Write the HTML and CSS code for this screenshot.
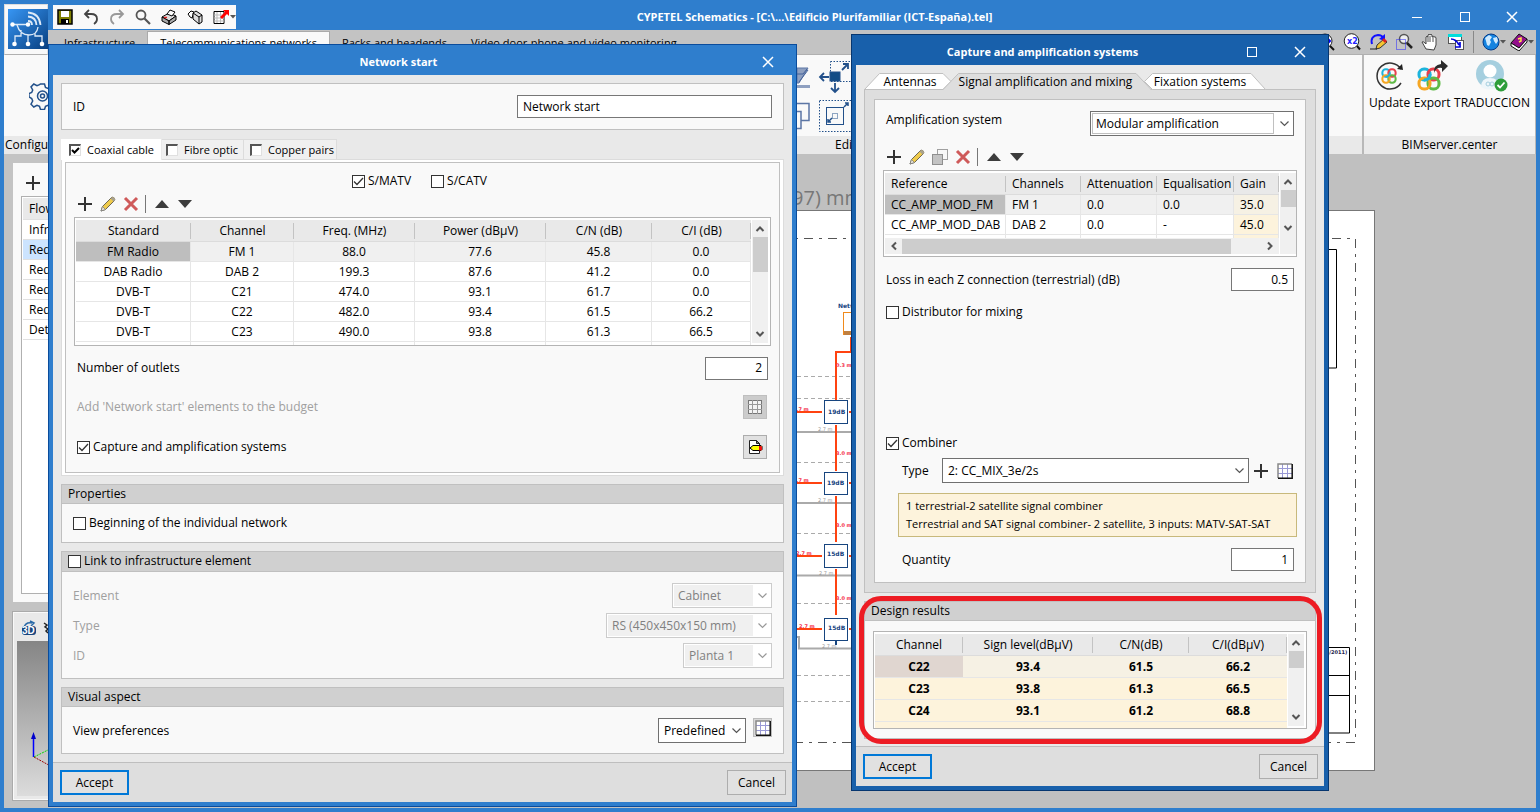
FILE: index.html
```html
<!DOCTYPE html>
<html lang="en">
<head>
<meta charset="utf-8">
<title>CYPETEL Schematics</title>
<link rel="stylesheet" href="styles.css">
</head>
<body>
<svg class="defs" aria-hidden="true">
  <symbol id="plus" viewBox="0 0 16 16"><path d="M8 1v14M1 8h14" stroke="#333" stroke-width="2" fill="none"/></symbol>
  <symbol id="pencil" viewBox="0 0 16 16"><path d="M1 15l1.500-4.500L11 2q1.500-1.500 3-.2 1.500 1.500 .2 3L5.500 13.500z" fill="#efcb4c" stroke="#6b6656" stroke-width="1"/><path d="M1 15l1.500-4.500 3 3z" fill="#e8e4d8" stroke="#777" stroke-width=".7"/><path d="M10.500 2.500l3 3L15 4q.5-1.500-.8-2.500-1.300-.9-2.500.2z" fill="#a9a28c"/></symbol>
  <symbol id="cross" viewBox="0 0 16 16"><path d="M2 2l12 12M14 2L2 14" stroke="#cf5a5a" stroke-width="3" fill="none"/></symbol>
  <symbol id="copy" viewBox="0 0 16 16"><rect x="5.500" y=".5" width="10" height="10" fill="#f7f7f7" stroke="#a0a0a0"/><rect x=".5" y="5.500" width="10" height="10" fill="#c3c3c3" stroke="#8f8f8f"/></symbol>
  <symbol id="up" viewBox="0 0 16 16"><path d="M1 12l7-8 7 8z" fill="#3c3c3c"/></symbol>
  <symbol id="down" viewBox="0 0 16 16"><path d="M1 4l7 8 7-8z" fill="#3c3c3c"/></symbol>
  <symbol id="grid" viewBox="0 0 16 16"><rect x="1" y="1" width="14" height="14" fill="#fff"/><path d="M5.500 1v14M10.500 1v14M1 5.500h14M1 10.500h14" stroke="#9a9ad6" fill="none"/><path d="M15 1H1v14" stroke="#888" fill="none" stroke-width="1.500"/><path d="M15.200 1v14.200H1" stroke="#111" fill="none" stroke-width="1.500"/></symbol>
  <symbol id="gridoff" viewBox="0 0 16 16"><rect x="1.500" y="1.500" width="13" height="13" fill="#f4f4f4" stroke="#777"/><path d="M5.500 1v14M10.500 1v14M1 5.500h14M1 10.500h14" stroke="#999" fill="none"/></symbol>
  <symbol id="docpen" viewBox="0 0 16 16"><path d="M2.500 1.500h7l3 3v10h-10z" fill="#fff" stroke="#222"/><path d="M9.500 1.500v3h3z" fill="#777" stroke="#222"/><path d="M3 9l3-2.500h8l1 1v3l-1 1H6z" fill="#ff0" stroke="#000"/><path d="M12 7h2l1 1v3l-1 .5h-2z" fill="#e11"/></symbol>
  <symbol id="sup" viewBox="0 0 10 10"><path d="M1.500 7L5 3.500 8.500 7" fill="none" stroke="#555" stroke-width="2"/></symbol>
  <symbol id="sdown" viewBox="0 0 10 10"><path d="M1.500 3L5 6.500 8.500 3" fill="none" stroke="#555" stroke-width="2"/></symbol>
  <symbol id="sleft" viewBox="0 0 10 10"><path d="M7 1.500L3.500 5 7 8.500" fill="none" stroke="#555" stroke-width="2"/></symbol>
  <symbol id="sright" viewBox="0 0 10 10"><path d="M3 1.500L6.500 5 3 8.500" fill="none" stroke="#555" stroke-width="2"/></symbol>
  <symbol id="close" viewBox="0 0 12 12"><path d="M1 1l10 10M11 1L1 11" stroke="#fff" stroke-width="1.500" fill="none"/></symbol>
  <symbol id="max" viewBox="0 0 12 12"><rect x="1.500" y="1.500" width="9" height="9" stroke="#fff" fill="none"/></symbol>
  <symbol id="min" viewBox="0 0 12 12"><path d="M1 6.500h10" stroke="#fff" fill="none"/></symbol>
  <symbol id="caret" viewBox="0 0 6 4"><path d="M0 0h6L3 3.500z" fill="#555"/></symbol>
  <symbol id="knot" viewBox="0 0 24 24"><g fill="none" stroke-width="3"><rect x="2" y="2" width="11" height="11" rx="5" stroke="#1db4dc"/><rect x="11" y="2" width="11" height="11" rx="5" stroke="#e8404c"/><rect x="11" y="11" width="11" height="11" rx="5" stroke="#5fb946"/><rect x="2" y="11" width="11" height="11" rx="5" stroke="#f5a623"/><path d="M7 13q6 0 6-6" stroke="#1db4dc"/></g></symbol>
</svg>

<div class="app">
  <header class="head">
    <div class="logo">
      <svg viewBox="0 0 40 40" width="40" height="40"><defs><linearGradient id="lg" x1="0" y1="0" x2="1" y2="1"><stop offset="0" stop-color="#3796f4"/><stop offset="1" stop-color="#083f80"/></linearGradient></defs><rect width="40" height="40" fill="url(#lg)"/><g fill="none" stroke="#dce9f7"><path d="M5 15.500h15M9 16q3 10 12 10 8 0 9-8M13 21v6H7v8M20 26v9M27 24v3h7v8" stroke-width="1.300"/><path d="M20 12q4 0 4 4M20 7.500q8 .5 8.500 8.500M20 3.500q11.500 1 12.500 12.500" stroke-width="1.800"/></g><g fill="#fff"><circle cx="4.500" cy="15.500" r="2.200"/><circle cx="20" cy="15.500" r="2.200"/><circle cx="6.500" cy="35" r="2.300"/><circle cx="20" cy="35" r="2.300"/><circle cx="34" cy="35" r="2.300"/></g></svg>
    </div>
    <div class="titlebar">
      <nav class="quick">
        <svg viewBox="0 0 16 16" width="16" height="16"><rect x="1" y="1" width="14" height="14" fill="#808000" stroke="#000" stroke-width="1.500"/><rect x="4" y="2" width="8" height="6" fill="#fff"/><rect x="4" y="10" width="8" height="5" fill="#000"/><rect x="9" y="11" width="2" height="3" fill="#fff"/></svg>
        <svg viewBox="0 0 16 16" width="16" height="16"><path d="M6 1L2 5l4 4M2 5h6q6 0 6 5 0 3-3 5" fill="none" stroke="#444" stroke-width="1.800"/></svg>
        <svg viewBox="0 0 16 16" width="16" height="16"><path d="M10 1l4 4-4 4M14 5H8q-6 0-6 5 0 3 3 5" fill="none" stroke="#999" stroke-width="1.800"/></svg>
        <svg viewBox="0 0 16 16" width="16" height="16"><circle cx="6" cy="6" r="4.500" fill="none" stroke="#555" stroke-width="1.800"/><path d="M9.500 9.500L15 15" stroke="#555" stroke-width="2.200"/></svg>
        <svg viewBox="0 0 16 16" width="16" height="16"><path d="M1 8l7-4 7 3-7 5z" fill="#ddd" stroke="#000"/><path d="M1 8v4l7 3.500V12zM15 7v4l-7 4.500V12z" fill="#aaa" stroke="#000"/><path d="M6 5l3-4 5 2-3 4z" fill="#fff" stroke="#000"/><path d="M3 8.500h3" stroke="#d22" stroke-width="1.500"/></svg>
        <svg viewBox="0 0 16 16" width="16" height="16"><path d="M1 5l3-3 3 1-2 6-2-1z" fill="#fff" stroke="#000"/><path d="M6 4l3-2 6 4v7l-3 2-6-5z" fill="#ddd" stroke="#000"/><path d="M6 4l6 4v7M12 8l3-2" stroke="#000" fill="none"/></svg>
        <span class="drop"><svg viewBox="0 0 16 16" width="16" height="16"><path d="M1 2.500h10v12H1z" fill="#fff" stroke="#000"/><path d="M4 3v11M7.500 3v11M1 6h10M1 9h10M1 12h10" stroke="#bbb" fill="none"/><path d="M7 8l5-5-2-2h6v6l-2-2-5 5z" fill="#f00"/></svg><svg width="6" height="4"><use href="#caret"/></svg></span>
      </nav>
      <h1 class="apptitle">CYPETEL Schematics - [C:\...\Edificio Plurifamiliar (ICT-España).tel]</h1>
      <div class="winbtns">
        <button aria-label="Minimise"><svg width="12" height="12"><use href="#min"/></svg></button>
        <button aria-label="Maximise"><svg width="12" height="12"><use href="#max"/></svg></button>
        <button aria-label="Close"><svg width="12" height="12"><use href="#close"/></svg></button>
      </div>
    </div>
    <div class="tabrow">
      <button class="rtab">Infrastructure</button>
      <button class="rtab on">Telecommunications networks</button>
      <button class="rtab">Racks and headends</button>
      <button class="rtab">Video door-phone and video monitoring</button>
      <div class="viewtools">
        <svg viewBox="0 0 18 18" width="18" height="18"><circle cx="8" cy="8" r="7" fill="#fff" stroke="#222"/><path d="M4 8h8M10 5l3 3-3 3" stroke="#00f" fill="none" stroke-width="2"/><path d="M13 13l4 4" stroke="#111" stroke-width="2"/></svg>
        <svg viewBox="0 0 18 18" width="18" height="18"><circle cx="8.500" cy="8" r="7.300" fill="#fff" stroke="#222"/><text x="4" y="11" class="x2">x2</text><path d="M14 13l3 3.500" stroke="#111" stroke-width="2"/></svg>
        <svg viewBox="0 0 18 18" width="18" height="18"><path d="M3 11Q1 3 9 2q4 0 5 3" fill="none" stroke="#11f" stroke-width="2"/><path d="M16 1v7l-6-2z" fill="#11f"/><path d="M7 16l1-4 7-6 3 3-7 6z" fill="#f4c430" stroke="#333"/><path d="M13 7l2-2 3 3-2 2z" fill="#d22"/><path d="M1 16h7" stroke="#222"/></svg>
        <svg viewBox="0 0 18 18" width="18" height="18"><circle cx="9" cy="6" r="4.500" fill="#eee" stroke="#555" stroke-width="1.500"/><path d="M12 10l5 5" stroke="#222" stroke-width="2.500"/><rect x="1.500" y="6.500" width="9" height="10" fill="none" stroke="#22f" stroke-dasharray="1 1"/></svg>
        <svg viewBox="0 0 18 18" width="18" height="18"><path d="M5 16L1 9q1-1 3 1l1 1V4q1-1.500 2 0V2q1-1.500 2 0 1-1.500 2 0v2q1.500-1.500 2 0 1.500-1 2 1v7l-2 5z" fill="#fff" stroke="#444"/><path d="M7 4v5M9 3v6M12 4v5" stroke="#555"/></svg>
        <svg viewBox="0 0 18 18" width="18" height="18"><rect x="1.500" y="1.500" width="13" height="9" fill="#fff" stroke="#555"/><path d="M1 1h14v3H1z" fill="#0dd"/><rect x="8.500" y="7.500" width="8" height="9" fill="#fff" stroke="#555"/><path d="M4 6q5 0 8 6M13 9v5H8" stroke="#00d" stroke-width="1.700" fill="none"/></svg>
        <i class="vsep"></i>
        <span class="drop"><svg viewBox="0 0 18 18" width="18" height="18"><circle cx="9" cy="9" r="8" fill="#1583e0" stroke="#063b88"/><path d="M3 5l4-3 3 2-2 3 1 2-2 4-2-1-1-4zM11 5l4-1 1 4-2 3-2-3z" fill="#cfeaff"/></svg><svg width="6" height="4"><use href="#caret"/></svg></span>
        <span class="drop"><svg viewBox="0 0 18 18" width="18" height="18"><path d="M1 10l8-9 8 5-8 9z" fill="#93108c" stroke="#111"/><path d="M1 10v3l8 5 8-9V6l-8 9z" fill="#fff" stroke="#111"/><path d="M8 6l3-1v3L9 9" stroke="#ffe14a" stroke-width="1.500" fill="none"/></svg><svg width="6" height="4"><use href="#caret"/></svg></span>
      </div>
    </div>
  </header>

  <section class="ribbon">
    <div class="rgroup cfg">
      <div class="rbody"><svg viewBox="0 0 28 28" width="28" height="28"><g fill="none" stroke="#22508a" stroke-width="1.500"><path d="M11.500 2h4l1 3.500 2.500 1 3.200-1.700 2.800 2.900-1.700 3.100 1 2.500L28 14v0l-3.700 2.500-1 2.500 1.700 3.200-2.800 2.800-3.200-1.700-2.500 1-1 3.200h-4l-1-3.200-2.500-1L4.800 25 2 22.200l1.700-3.200-1-2.500L0 15v-3.500l2.700-1 1-2.500L2 4.900 4.800 2 8 3.700l2.500-1z"/><circle cx="13.500" cy="14" r="5"/><circle cx="13.500" cy="14" r="2"/></g></svg></div>
      <div class="rlabel">Configuration</div>
    </div>
    <div class="rgroup edit">
      <div class="rbody">
        <svg viewBox="797 58 60 76" width="60" height="76"><g fill="none" stroke="#22508a">
          <path d="M797 68h11l-9 15h-2z" fill="#8fa0c0" stroke="#5c76a5"/><path d="M797 74h6l4-5M799 82l9-12" stroke="#43629a"/><path d="M797 86.500h13" stroke="#8fa0c0" stroke-width="3"/>
          <rect x="830.500" y="61.500" width="30" height="20" stroke-dasharray="1.500 1.500"/><rect x="830" y="72" width="10" height="9" fill="#124c86"/><path d="M829 77h-8M824 73l-4 4 4 4M835 83v8M831 88l4 4 4-4M842 70l6-6M843 64h5v5" stroke-width="1.800"/>
          <path d="M797 103.500h12v17h-8M797 111.500h4v17h-4" stroke="#5c76a5" stroke-width="1.500"/>
          <rect x="819.500" y="100.500" width="36" height="31" stroke-dasharray="1.500 1.500"/><rect x="826.500" y="107.500" width="17" height="17"/><rect x="832.500" y="113.500" width="5" height="5" stroke-dasharray="1 1"/><path d="M828 122l4-4M828 119v3h3M844 107l4-4M845 103h3v3" stroke-width="1.500"/>
        </g></svg>
      </div>
      <div class="rlabel">Edit</div>
    </div>
    <div class="rgroup bim">
      <div class="rbody">
        <button class="rbtn"><svg viewBox="0 0 32 32" width="32" height="32"><path d="M27 9A13 13 0 1 0 27 23" fill="none" stroke="#333" stroke-width="1.500"/><path d="M23 9l6 1-1-6z" fill="#222"/><use href="#knot" x="7" y="8" width="16" height="16"/></svg>Update</button>
        <button class="rbtn"><svg viewBox="0 0 32 32" width="32" height="32"><use href="#knot" x="1" y="7" width="24" height="24"/><path d="M18 13q-1-8 7-9V0l7 6-6 6V8q-6-1-8 5z" fill="#2b2b2b"/></svg>Export</button>
        <button class="rbtn"><svg viewBox="0 0 34 32" width="34" height="32"><circle cx="15" cy="14" r="14" fill="#a5cfdf"/><circle cx="15" cy="11" r="6.500" fill="#fff"/><path d="M6 27q0-9 9-9t9 9q-9 5-18 0z" fill="#eef6fa"/><circle cx="13" cy="24" r="2" fill="none" stroke="#a5cfdf"/><circle cx="17" cy="24" r="2" fill="none" stroke="#a5cfdf"/><circle cx="26" cy="25" r="6.500" fill="#2e9e3a"/><path d="M22.500 25l2.500 2.500 4.500-5" stroke="#fff" stroke-width="1.800" fill="none"/></svg>TRADUCCION</button>
      </div>
      <div class="rlabel">BIMserver.center</div>
    </div>
  </section>

  <main class="work">
    <aside class="side">
      <div class="tree">
        <button class="ic" aria-label="Add"><svg width="16" height="16"><use href="#plus"/></svg></button>
        <ul class="treelist"><li class="th">Flow</li><li>Infra</li><li class="sel">Red</li><li>Red</li><li>Red</li><li>Red</li><li>Deta</li></ul>
      </div>
      <div class="view3d">
        <div class="v3bar"><svg viewBox="0 0 40 18" width="40" height="18"><path d="M3 8q1-6 8-5M9 1l4 2-3 3" stroke="#2a6aa8" stroke-width="1.500" fill="none"/><rect x="1" y="6" width="14" height="9" rx="3" fill="#17457f"/><text x="1" y="14" class="t3d">3D</text><path d="M23 3l3 2-2 2 3 2-2 2 2 2" stroke="#222" fill="none" stroke-width="1.500"/></svg></div>
        <div class="v3scene"><svg viewBox="0 0 50 60" width="50" height="60"><path d="M16.500 36V18" stroke="#00f" stroke-width="1.500"/><path d="M14 18l2.500-7 2.500 7z" fill="#00c"/><path d="M17 36l22-11" stroke="#0d0" stroke-dasharray="2 1"/><path d="M17 36l22 12" stroke="#900" stroke-dasharray="2 1"/></svg></div>
      </div>
    </aside>
    <div class="canvas">
      <svg class="plan" width="1296" height="654" viewBox="240 154 1296 654">
        <text x="765" y="205" class="size">x 297) mm</text>
        <rect x="400.500" y="210.500" width="974" height="560" fill="#fff" stroke="#777"/>
        <path d="M420 238.500H1355.500V742.500H420" fill="none" stroke="#555" stroke-dasharray="9 6 3 6"/>
        <path d="M1200 249.500h136.500v118.500H1200M1200 647.500h149.500v85.500H1200M1200 675.500h149M1200 695.500h149" fill="none" stroke="#000"/>
        <text x="1320" y="654" class="rev">(15/2011)</text>
        <g stroke="#aaa" stroke-dasharray="4 3"><path d="M797 376.500h60M797 398.500h60M797 462.500h60M797 533.500h60M797 603.500h60M797 675.500h60M797 701.500h60"/></g>
        <path d="M797 432h60M797 503h60M797 575.500h60M797 637h2v11.500h58" stroke="#aaa" stroke-width="2" fill="none"/>
        <path d="M857 352h-21v49M836 425v46M836 496v46M836 569v46M797 412h25M797 483h25M797 556h25M797 629h25M849 412h8M849 483h8M849 556h8M849 629h8" stroke="#ff4310" stroke-width="2" fill="none"/>
        <rect x="843.500" y="312.500" width="20" height="22" fill="#fff" stroke="#f08a1c"/><path d="M844 333h14" stroke="#c08040" stroke-width="4"/>
        <path d="M851 337v15" stroke="#ff4310" stroke-width="2"/>
        <g fill="#fff" stroke="#17457f"><rect x="824.500" y="400.500" width="23" height="23"/><rect x="824.500" y="472.500" width="23" height="22"/><rect x="824.500" y="544.500" width="23" height="23"/><rect x="824.500" y="618.500" width="23" height="22"/><path d="M836 641v4" stroke-width="2"/></g>
        <g class="tag"><text x="828" y="414">19dB</text><text x="827" y="485">19dB</text><text x="827" y="556">15dB</text><text x="828" y="630">15dB</text><text x="838" y="308">Network</text></g>
        <g class="len"><text x="836" y="367">0.3 m</text><text x="836" y="455">3.0 m</text><text x="836" y="527">3.0 m</text><text x="836" y="600">3.0 m</text><text x="793" y="411">2.7 m</text><text x="793" y="482">2.7 m</text><text x="796" y="555">2.7 m</text><text x="799" y="628">2.7 m</text></g>
        <g class="len2"><text x="818" y="431">2.7 m</text><text x="818" y="502">2.7 m</text><text x="819" y="575">2.7 m</text><text x="822" y="648">2.7 m</text></g>
      </svg>
    </div>
  </main>
</div>

<section class="dialog d1" aria-label="Network start">
  <header class="dtitle"><h2>Network start</h2><div class="dbtns"><button aria-label="Close"><svg width="12" height="12"><use href="#close"/></svg></button></div></header>
  <div class="dbody">
    <div class="box idbox"><label for="nid">ID</label><input id="nid" type="text" value="Network start"></div>
    <div class="ctabs">
      <div class="ctabrow">
        <label class="ctab on"><input type="checkbox" class="old" checked>Coaxial cable</label>
        <label class="ctab"><input type="checkbox" class="old">Fibre optic</label>
        <label class="ctab"><input type="checkbox" class="old">Copper pairs</label>
      </div>
      <div class="cpanel"><div class="cinner">
        <div class="modes"><label><input type="checkbox" class="cb" checked>S/MATV</label><label><input type="checkbox" class="cb">S/CATV</label></div>
        <div class="tools">
          <button class="ic" aria-label="Add"><svg width="16" height="16"><use href="#plus"/></svg></button><button class="ic" aria-label="Edit"><svg width="16" height="16"><use href="#pencil"/></svg></button><button class="ic" aria-label="Delete"><svg width="16" height="16"><use href="#cross"/></svg></button><i></i><button class="ic" aria-label="Up"><svg width="16" height="16"><use href="#up"/></svg></button><button class="ic" aria-label="Down"><svg width="16" height="16"><use href="#down"/></svg></button>
        </div>
        <div class="grid g1">
          <table><colgroup><col class="w115"><col class="w103"><col class="w121"><col class="w131"><col class="w106"><col></colgroup>
            <thead><tr><th>Standard</th><th>Channel</th><th>Freq. (MHz)</th><th>Power (dBµV)</th><th>C/N (dB)</th><th>C/I (dB)</th></tr></thead>
            <tbody>
              <tr class="cur"><td>FM Radio</td><td>FM 1</td><td>88.0</td><td>77.6</td><td>45.8</td><td>0.0</td></tr>
              <tr><td>DAB Radio</td><td>DAB 2</td><td>199.3</td><td>87.6</td><td>41.2</td><td>0.0</td></tr>
              <tr><td>DVB-T</td><td>C21</td><td>474.0</td><td>93.1</td><td>61.7</td><td>0.0</td></tr>
              <tr><td>DVB-T</td><td>C22</td><td>482.0</td><td>93.4</td><td>61.5</td><td>66.2</td></tr>
              <tr><td>DVB-T</td><td>C23</td><td>490.0</td><td>93.8</td><td>61.3</td><td>66.5</td></tr>
              <tr><td></td><td></td><td></td><td></td><td></td><td></td></tr>
            </tbody></table>
          <div class="vscroll"><svg width="10" height="10"><use href="#sup"/></svg><b class="thumb t35"></b><svg class="end" width="10" height="10"><use href="#sdown"/></svg></div>
        </div>
        <div class="line l1"><label for="outlets">Number of outlets</label><input id="outlets" class="num" type="text" value="2"></div>
        <div class="line l2"><span class="off">Add 'Network start' elements to the budget</span><button class="sq dis" disabled aria-label="Budget"><svg width="16" height="16"><use href="#gridoff"/></svg></button></div>
        <div class="line l2"><label><input type="checkbox" class="cb" checked>Capture and amplification systems</label><button class="sq" aria-label="Edit systems"><svg width="16" height="16"><use href="#docpen"/></svg></button></div>
      </div></div>
    </div>
    <div class="group"><h3>Properties</h3><div class="gbody props"><label><input type="checkbox" class="cb">Beginning of the individual network</label></div></div>
    <div class="group"><h3 class="tick"><label><input type="checkbox" class="cb">Link to infrastructure element</label></h3>
      <div class="gbody link">
        <div class="frow"><label class="off" for="el">Element</label><select id="el" class="w100" disabled><option>Cabinet</option></select></div>
        <div class="frow"><label class="off" for="ty">Type</label><select id="ty" class="w166" disabled><option>RS (450x450x150 mm)</option></select></div>
        <div class="frow"><label class="off" for="pl">ID</label><select id="pl" class="w89" disabled><option>Planta 1</option></select></div>
      </div></div>
    <div class="group"><h3>Visual aspect</h3><div class="gbody visual"><label for="vp">View preferences</label><span class="pair"><select id="vp" class="w88"><option>Predefined</option></select><button class="mini" aria-label="Preferences"><svg width="16" height="16"><use href="#grid"/></svg></button></span></div></div>
  </div>
  <footer class="dfoot"><button class="btn primary">Accept</button><button class="btn">Cancel</button></footer>
</section>

<section class="dialog d2" aria-label="Capture and amplification systems">
  <header class="dtitle"><h2>Capture and amplification systems</h2><div class="dbtns"><button aria-label="Maximise"><svg width="12" height="12"><use href="#max"/></svg></button><button aria-label="Close"><svg width="12" height="12"><use href="#close"/></svg></button></div></header>
  <div class="dbody">
    <div class="stabs">
      <button class="stab s1"><svg viewBox="0 0 88 17" width="88" height="17"><path d="M.5 16.500L15.500 .5H79l8 8-8 8z" fill="#fff" stroke="#c0c0c0"/></svg><span>Antennas</span></button>
      <button class="stab s2"><svg viewBox="0 0 208 17" width="208" height="17"><path d="M0 17L15.500 .5H193L208 17z" fill="#dedede"/><path d="M0 16.500L15.500 .5H193L208 16.500" fill="none" stroke="#c0c0c0"/></svg><span>Signal amplification and mixing</span></button>
      <button class="stab s3"><svg viewBox="0 0 122 17" width="122" height="17"><path d="M.5 8.500L8.500 .5H107L121.500 16.500H8.500z" fill="#fff" stroke="#c0c0c0"/></svg><span>Fixation systems</span></button>
    </div>
    <div class="spanel"><div class="sinner">
      <div class="srow amp"><label for="as">Amplification system</label><span class="boxed"><select id="as" class="w204"><option>Modular amplification</option></select></span></div>
      <div class="tools">
        <button class="ic" aria-label="Add"><svg width="16" height="16"><use href="#plus"/></svg></button><button class="ic" aria-label="Edit"><svg width="16" height="16"><use href="#pencil"/></svg></button><button class="ic" aria-label="Copy"><svg width="16" height="16"><use href="#copy"/></svg></button><button class="ic" aria-label="Delete"><svg width="16" height="16"><use href="#cross"/></svg></button><i></i><button class="ic" aria-label="Up"><svg width="16" height="16"><use href="#up"/></svg></button><button class="ic" aria-label="Down"><svg width="16" height="16"><use href="#down"/></svg></button>
      </div>
      <div class="grid g2">
        <div class="gmain">
          <div class="gclip"><table><colgroup><col class="w121"><col class="w75"><col class="w76"><col class="w77"><col></colgroup>
            <thead><tr><th>Reference</th><th>Channels</th><th>Attenuation</th><th>Equalisation</th><th>Gain</th></tr></thead>
            <tbody>
              <tr class="cur"><td>CC_AMP_MOD_FM</td><td>FM 1</td><td>0.0</td><td>0.0</td><td class="calc">35.0</td></tr>
              <tr><td>CC_AMP_MOD_DAB</td><td>DAB 2</td><td>0.0</td><td>-</td><td class="calc">45.0</td></tr>
              <tr><td></td><td></td><td></td><td></td><td class="calc"></td></tr>
            </tbody></table></div>
          <div class="hscroll"><svg width="10" height="10"><use href="#sleft"/></svg><b></b><svg width="10" height="10"><use href="#sright"/></svg></div>
        </div>
        <div class="vscroll"><svg width="10" height="10"><use href="#sup"/></svg><b class="thumb t17"></b><svg class="end" width="10" height="10"><use href="#sdown"/></svg></div>
      </div>
      <div class="srow loss"><label for="zl">Loss in each Z connection (terrestrial) (dB)</label><input id="zl" class="num" type="text" value="0.5"></div>
      <div class="srow dist"><label><input type="checkbox" class="cb">Distributor for mixing</label></div>
      <div class="srow comb"><label><input type="checkbox" class="cb" checked>Combiner</label></div>
      <div class="type"><label for="ct">Type</label><select id="ct"><option>2: CC_MIX_3e/2s</option></select><button class="ic" aria-label="Add"><svg width="16" height="16"><use href="#plus"/></svg></button><button class="ic" aria-label="List"><svg width="16" height="16"><use href="#grid"/></svg></button></div>
      <p class="info">1 terrestrial-2 satellite signal combiner<br>Terrestrial and SAT signal combiner- 2 satellite, 3 inputs: MATV-SAT-SAT</p>
      <div class="srow qty"><label for="q">Quantity</label><input id="q" class="num" type="text" value="1"></div>
    </div></div>
    <div class="group results"><h3>Design results</h3><div class="gbody">
      <div class="grid g3">
        <table><colgroup><col class="w88"><col class="w130"><col class="w96"><col></colgroup>
          <thead><tr><th>Channel</th><th>Sign level(dBµV)</th><th>C/N(dB)</th><th>C/I(dBµV)</th></tr></thead>
          <tbody>
            <tr class="cur"><td>C22</td><td>93.4</td><td>61.5</td><td>66.2</td></tr>
            <tr><td>C23</td><td>93.8</td><td>61.3</td><td>66.5</td></tr>
            <tr><td>C24</td><td>93.1</td><td>61.2</td><td>68.8</td></tr>
            <tr><td></td><td></td><td></td><td></td></tr>
          </tbody></table>
        <div class="vscroll"><svg width="10" height="10"><use href="#sup"/></svg><b class="thumb t17"></b><svg class="end" width="10" height="10"><use href="#sdown"/></svg></div>
      </div>
    </div></div>
  </div>
  <footer class="dfoot"><button class="btn primary">Accept</button><button class="btn">Cancel</button></footer>
</section>
</body>
</html>
```
FILE: styles.css
```css
* { box-sizing: border-box; }
body { margin: 0; font: 12px/18px "Open Sans", "Noto Sans", sans-serif; color: #000; background: #c0c0c0; overflow: hidden; }
button, input, select { font: inherit; color: inherit; margin: 0; }
button { background: none; border: 0; padding: 0; }
svg { display: block; flex: none; }
h1, h2, h3, p, ul { margin: 0; padding: 0; font-weight: normal; font-size: 12px; list-style: none; }
.defs { position: absolute; width: 0; height: 0; }

/* main window */
.app { height: 100vh; min-height: 812px; display: flex; flex-direction: column; border: 4px solid #2f7ecd; background: #c3c3c3; }
.head { display: grid; grid-template: 26px 25px / 44px 1fr; background: #2f7ecd; }
.logo { grid-row: 1 / 3; background: #f9f9f9; padding: 4px 0 0 3px; border: 1px solid #ddd; border-bottom: 1px solid #b0b0b0; }
.titlebar { display: flex; align-items: center; }
.quick { display: flex; align-items: center; gap: 10px; background: #f9f9f9; height: 24px; width: 183px; margin-left: 5px; padding-left: 4px; }
.drop { display: flex; align-items: center; gap: 1px; }
.apptitle { flex: 1; text-align: center; color: #fff; font-weight: bold; font-size: 11px; }
.winbtns { display: flex; width: 143px; }
.winbtns button { width: 48px; height: 26px; display: grid; place-items: center; }
.tabrow { display: flex; align-items: flex-end; background: #c3c3c3; border-bottom: 1px solid #b0b0b0; padding-left: 4px; }
.rtab { height: 23px; padding: 0 12px; white-space: nowrap; font-size: 11px; }
.rtab.on { background: #f9f9f9; border: 1px solid #aaa; border-bottom: 0; }
.viewtools { margin-left: auto; align-self: center; display: flex; align-items: center; gap: 8px; padding-right: 2px; }
.viewtools .drop { gap: 0; }
.viewtools .drop + .drop { margin-left: -4px; }
.vsep { width: 1px; height: 22px; background: #888; }
.x2 { font: bold 8px "DejaVu Sans", sans-serif; fill: #22f; }

.ribbon { display: flex; height: 99px; background: #f9f9f9; }
.rgroup { display: flex; flex-direction: column; border-right: 2px solid #b8b8b8; }
.rbody { flex: 1; display: flex; }
.rlabel { background: #e9e9e9; height: 18px; }
.cfg { flex: 0 0 790px; border: 0; }
.cfg .rbody { padding: 27px 0 0 25px; }
.cfg .rlabel { padding-left: 1px; }
.edit { flex: 1; }
.edit .rbody { padding: 3px 0 0 3px; }
.edit .rlabel { padding-left: 41px; }
.bim { flex: 0 0 172px; border-right: 1px solid #b8b8b8; }
.bim .rbody { justify-content: space-between; padding: 5px 5px 0 5px; }
.bim .rlabel { text-align: center; }
.rbtn { display: flex; flex-direction: column; align-items: center; gap: 2px; }

.work { flex: 1; display: flex; min-height: 0; }
.side { flex: 0 0 236px; display: flex; flex-direction: column; gap: 10px; padding: 9px 0 8px 9px; }
.tree { flex: 1; background: #f9f9f9; padding: 12px 8px 8px; display: flex; flex-direction: column; gap: 5px; }
.ic { width: 24px; height: 16px; display: grid; place-items: center; }
.treelist { flex: 1; background: #fff; border: 1px solid #b0b0b0; padding: 1px; }
.treelist li { height: 20px; line-height: 20px; padding-left: 6px; border-bottom: 1px solid #e0e0e0; }
.treelist .th { height: 22px; line-height: 21px; background: #e9e9e9; }
.treelist .sel { background: #cce4ff; }
.view3d { height: 188px; background: #e9e9e9; border: 1px solid #f9f9f9; outline: 1px solid #aaa; padding: 3px; display: flex; flex-direction: column; }
.v3bar { height: 25px; padding: 4px 4px; }
.t3d { font: bold 10px "Liberation Sans", sans-serif; fill: #fff; }
.v3scene { flex: 1; background: linear-gradient(#858585, #dcdcdc); display: flex; align-items: flex-end; padding-bottom: 15px; }
.canvas { flex: 1; overflow: hidden; background: #c0c0c0; }
.size { font: 20px "Open Sans", sans-serif; fill: #777; }
.tag { font: bold 6px "DejaVu Sans", sans-serif; fill: #17457f; }
.len { font: bold 5px "DejaVu Sans", sans-serif; fill: #f4304c; }
.len2 { font: 5px "DejaVu Sans", sans-serif; fill: #999; }
.rev { font: bold 5px "DejaVu Sans", sans-serif; fill: #1a1a4c; }

/* dialogs */
.dialog { position: absolute; --edge: #2f7ecd; --rim: #0a4c9c; background: var(--edge); border: 1px solid var(--rim); padding: 0 4px 4px; }
.d1 { left: 48px; top: 44px; width: 749px; }
.d2 { left: 851px; top: 34px; width: 478px; --edge: #1860ab; --rim: #06366f; }
.dtitle { height: 30px; position: relative; display: grid; place-items: center; color: #fff; padding-top: 4px; padding-right: 48px; }
.d2 .dtitle { padding-right: 95px; }
.dtitle h2 { font-weight: bold; font-size: 11px; }
.dbtns { position: absolute; right: 0; top: 2px; display: flex; }
.dbtns button { width: 48px; height: 30px; display: grid; place-items: center; }
.dbody { background: #e9e9e9; padding: 8px 8px 8px; display: flex; flex-direction: column; gap: 8px; }
.dfoot { display: flex; justify-content: space-between; background: #dedede; border-top: 1px solid #bebebe; padding: 7px 6px 7px 7px; height: 40px; }
.btn { height: 25px; width: 59px; border: 1px solid #adadad; background: #e1e1e1; }
.btn.primary { width: 69px; border: 2px solid #0078d7; }
.box { background: #f9f9f9; border: 1px solid #c0c0c0; }
.idbox { display: flex; align-items: center; justify-content: space-between; height: 47px; padding: 0 11px; }
input[type="text"] { border: 1px solid #777; background: #fff; height: 23px; padding: 0 5px 1px; }
.idbox input { width: 255px; }
input.num { width: 63px; text-align: right; }
label { display: flex; align-items: center; }
.cb { appearance: none; width: 13px; height: 13px; border: 1px solid #333; background: #fff; margin-right: 3px; }
.cb:checked { background: #fff url("data:image/svg+xml,%3Csvg xmlns='http://www.w3.org/2000/svg' viewBox='0 0 11 11'%3E%3Cpath d='M1 5.500l3 3L10 2' fill='none' stroke='%23333' stroke-width='1.300'/%3E%3C/svg%3E"); }
.old { appearance: none; width: 12px; height: 12px; background: #fff; border: 1px solid #e0e0e0; border-top: 2px solid #555; border-left: 2px solid #555; margin-right: 6px; }
.old:checked { background: #fff url("data:image/svg+xml,%3Csvg xmlns='http://www.w3.org/2000/svg' viewBox='0 0 9 9'%3E%3Cpath d='M1 4l2.500 2.500L8 2' fill='none' stroke='%23000' stroke-width='2'/%3E%3C/svg%3E"); }
.off { color: #a0a0a0; }
.ctabrow { display: flex; align-items: flex-end; }
.ctab { height: 20px; font-size: 11px; background: #f0f0f0; border: 1px solid #dcdcdc; border-left: 0; border-bottom: 0; padding: 0 5px 0 4px; }
.ctab + .ctab + .ctab { padding: 0 2px 0 6px; }
.ctab.on { height: 22px; background: #fff; border-color: #e9e9e9; padding: 0 7px 0 8px; margin-bottom: -1px; z-index: 1; border-bottom: 0; }
.ctabs { height: 338px; display: flex; flex-direction: column; }
.cpanel { flex: 1; background: #fff; border: 1px solid #dcdcdc; padding: 2px 3px; }
.cinner { height: 100%; background: #f9f9f9; border: 1px solid #c0c0c0; padding: 9px 8px; }
.modes { display: flex; justify-content: center; gap: 20px; padding-right: 6px; }
.tools { display: flex; align-items: center; gap: 0; height: 22px; }
.tools .ic { width: 23px; }
.tools i { width: 1px; height: 18px; background: #777; margin: 0 4px 0 3px; }
.cinner .tools { margin: 3px 0 2px -1px; }
.grid { display: flex; border: 1px solid #b4b4b4; background: #fff; padding: 2px 1px; overflow: hidden; }
.grid table { flex: 1; width: 100%; table-layout: fixed; border-collapse: separate; border-spacing: 0; }
th { font-weight: normal; padding: 0; background: #e9e9e9 linear-gradient(#c3c3c3, #c3c3c3) no-repeat right center / 1px 16px; border-bottom: 1px solid #dcdcdc; }
td { padding: 0; text-align: center; border-right: 1px solid #e6e6e6; border-bottom: 1px solid #e6e6e6; }
.cur td { background: #f0f0f0; }
.cur td:first-child { background: #bebebe; }
.vscroll { flex: 0 0 17px; margin-left: 1px; background: #f0f0f0; display: flex; flex-direction: column; align-items: center; padding: 4px 0; border-right: 1px solid #fff; }
.vscroll .end { margin-top: auto; }
.thumb { width: 15px; background: #cdcdcd; margin-top: 3px; }
.t35 { height: 35px; }
.t17 { height: 17px; }
.g1 { height: 129px; }
.g1 th { height: 22px; }
.g1 td { height: 20px; line-height: 18px; }
.w115 { width: 115px; } .w103 { width: 103px; } .w121 { width: 121px; } .w131 { width: 131px; } .w106 { width: 106px; }
.line { display: flex; align-items: center; justify-content: space-between; padding: 0 4px 0 3px; }
.l1 { margin-top: 10px; height: 24px; padding-right: 3px; }
.l2 { margin-top: 14px; height: 26px; }
.sq { width: 24px; height: 24px; border: 1px solid #adadad; background: #e1e1e1; display: grid; place-items: center; }
.sq.dis { background: #ccc; border-color: #bfbfbf; }
.group { background: #f9f9f9; border: 1px solid #c0c0c0; }
.group h3 { background: #d0d0d0; border-bottom: 1px solid #c0c0c0; height: 19px; line-height: 18px; padding-left: 6px; }
.group .tick { height: 20px; }
.props { padding: 10px 11px; }
.props label { height: 18px; }
.link { padding: 11px 11px 10px; display: flex; flex-direction: column; gap: 5px; }
.frow, .visual { display: flex; justify-content: space-between; align-items: center; }
.visual { padding: 11px 11px 10px; }
.pair { display: flex; gap: 7px; }
.mini { width: 19px; height: 19px; background: #d8d8d8; border: 1px solid #bbb; display: grid; place-items: center; }
select { appearance: none; height: 25px; border: 1px solid #707070; border-radius: 0; padding: 0 5px; background: #fff url("data:image/svg+xml,%3Csvg xmlns='http://www.w3.org/2000/svg' viewBox='0 0 9 6'%3E%3Cpath d='M.5 .5l4 4 4-4' fill='none' stroke='%23555' stroke-width='1.200'/%3E%3C/svg%3E") no-repeat right 4px center / 9px 6px; }
select:disabled { opacity: 1; color: #808080; border-color: #ccc; background: url("data:image/svg+xml,%3Csvg xmlns='http://www.w3.org/2000/svg' viewBox='0 0 9 6'%3E%3Cpath d='M.5 .5l4 4 4-4' fill='none' stroke='%23999' stroke-width='1.200'/%3E%3C/svg%3E") no-repeat right 4px center / 9px 6px, linear-gradient(#f0f0f0, #f0f0f0) no-repeat 1px 1px / calc(100% - 19px) calc(100% - 2px) #fff; }
.w100 { width: 100px; } .w166 { width: 166px; } .w89 { width: 89px; } .w204 { width: 204px; }

.stabs { display: flex; margin-bottom: -9px; z-index: 1; }
.stab { position: relative; height: 17px; line-height: 17px; white-space: nowrap; }
.stab svg { position: absolute; left: 0; top: 0; }
.stab span { position: relative; }
.s1 { width: 79px; margin-left: 1px; padding-left: 13px; }
.s2 { width: 201px; z-index: 1; padding-left: 4px; }
.s3 { width: 122px; padding-right: 10px; z-index: 2; }
.d2 .dbody { padding: 8px 8px 7px 7px; }
.spanel { background: #dedede; border: 1px solid #c0c0c0; padding: 9px; margin-left: 1px; }
.sinner { background: #f9f9f9; border: 1px solid #c0c0c0; padding: 11px 8px; height: 484px; }
.srow { display: flex; justify-content: space-between; align-items: center; padding: 0 3px; }
.srow label { min-height: 18px; }
.boxed { position: relative; display: block; }
.boxed::after { content: ""; position: absolute; inset: 2px 20px 2px 2px; border: 1px solid #c0c0c0; pointer-events: none; }
.amp label { align-self: flex-start; }
.sinner .tools { margin: 10px 0 2px -1px; }
.g2 { height: 87px; }
.gmain { flex: 1; display: flex; flex-direction: column; }
.gclip { height: 65px; overflow: hidden; }
.g2 th { text-align: left; padding-left: 6px; height: 22px; }
.g2 td { text-align: left; padding-left: 6px; height: 20px; line-height: 18px; }
.g2 .calc { background: #fdf3dc; }
.g2 .cur .calc { background: #f6f1e4; }
.w75 { width: 75px; } .w76 { width: 76px; } .w77 { width: 77px; }
.hscroll { flex: 1; background: #f0f0f0; display: flex; align-items: center; padding: 0 4px; }
.hscroll b { width: 329px; height: 15px; background: #cdcdcd; margin: 0 34px 0 3px; }
.g2 .vscroll { padding-bottom: 21px; }
.loss { margin-top: 11px; }
.dist { margin-top: 12px; }
.comb { margin-top: 113px; }
.type { display: flex; align-items: center; margin: 6px 0 10px; padding-left: 19px; }
.type label { width: 40px; }
.type select { flex: 1; }
.info { background: #fdf3dc; border: 1px solid #c8b97c; padding: 3px 7px; margin-left: 15px; height: 44px; white-space: nowrap; font-size: 11px; }
.qty { margin-top: 11px; padding-left: 19px; }
.results { position: relative; }
.results::before { content: ""; position: absolute; inset: -6px -7px -6px -6px; border: 5px solid #ed1c24; border-radius: 22px; pointer-events: none; }
.d2 .results { margin-left: 1px; }
.results .gbody { padding: 10px 8px 9px; }
.g3 { height: 98px; }
.g3 th { height: 22px; }
.g3 td { height: 22px; line-height: 20px; background: #fdf3dc; font-weight: bold; border-right: 0; }
.g3 .cur td { background: #f6f1e4; }
.g3 .cur td:first-child { background: #e0d6d0; }
.w88 { width: 88px; } .w130 { width: 130px; } .w96 { width: 96px; }
```
